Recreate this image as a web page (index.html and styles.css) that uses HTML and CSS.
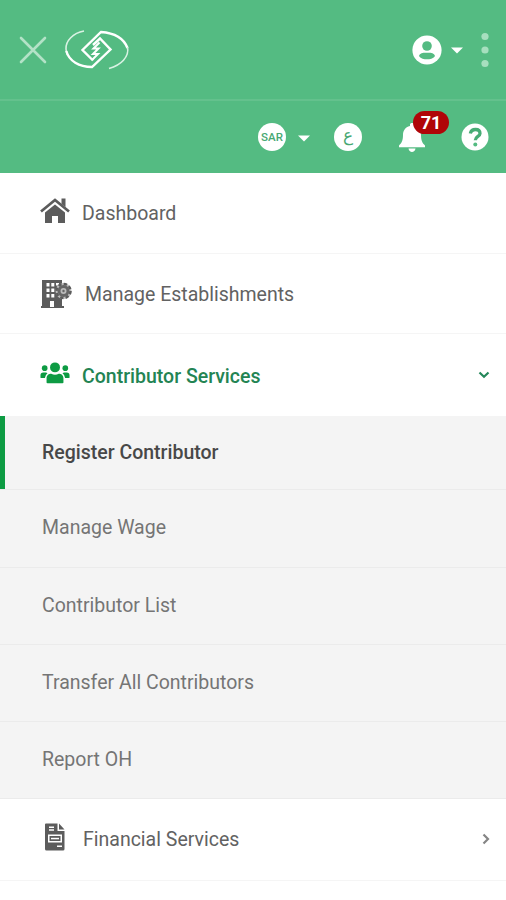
FILE: index.html
```html
<!DOCTYPE html>
<html lang="en">
<head>
<meta charset="utf-8">
<title>Contributor Services</title>
<link rel="stylesheet" href="styles.css">
</head>
<body>
<header class="header">
  <div class="bar bar-main">
    <svg class="close" width="28" height="28" viewBox="0 0 28 28"><path d="M2 2L26 26M26 2L2 26"/></svg>
    <svg class="logo" width="66" height="42" viewBox="0 0 66 42">
      <path class="thin" d="M20 2C9 4 1.500 12 2 20C2.200 22.500 2.500 24 3.500 26"/>
      <path d="M2.300 22C5 32 15 37.800 28 38L46.500 20.500L36 9.500L29 16"/>
      <path d="M29 31.500L18.500 21L37 3C51 4 60 10 63.500 19"/>
      <path class="thin" d="M63.500 18C65.500 28 57 36 45 39.500"/>
      <path class="steps" d="M35.500 13.500L29.500 19.500H34.500L29 25H34L28.500 30.500"/>
    </svg>
    <svg class="user" width="30" height="30" viewBox="0 0 30 30"><circle class="white" cx="15" cy="15" r="14.600"/><circle class="cut" cx="15" cy="11" r="4.800"/><path class="cut" d="M7 21C8 17.500 12 17.800 15 17.800S22 17.500 23 21C21 24 18 24.300 15 24.300S9 24 7 21Z"/></svg>
    <svg class="caret caret-user" width="12" height="7" viewBox="0 0 12 7"><path d="M0 .5H12L6 6.500Z"/></svg>
    <svg class="dots" width="8" height="36" viewBox="0 0 8 36"><circle cx="4" cy="4.500" r="3.600"/><circle cx="4" cy="18" r="3.600"/><circle cx="4" cy="31.500" r="3.600"/></svg>
  </div>
  <div class="bar bar-tools">
    <span class="disc sar">SAR</span>
    <svg class="caret caret-sar" width="12" height="7" viewBox="0 0 12 7"><path d="M0 .5H12L6 6.500Z"/></svg>
    <span class="disc lang">ع</span>
    <span class="bell-wrap">
      <svg width="28" height="30" viewBox="0 0 28 30"><path class="white" d="M12 2.500C12 .5 16 .5 16 2.500V4C21 5 23 9 23 13C23 19 24.500 21 27 23.500V25.300H1V23.500C3.500 21 5 19 5 13C5 9 7 5 12 4ZM10.500 26.500H17.500C17 31 11 31 10.500 26.500Z"/></svg>
      <span class="badge">71</span>
    </span>
    <svg class="help" width="28" height="28" viewBox="0 0 28 28"><circle class="white" cx="14" cy="14" r="13.500"/><path d="M9.300 10.500C10 7.400 12 6.500 14.500 6.500C17.500 6.500 19 8.300 19 10.500C19 13.500 14.300 13.500 14.300 17.300"/><circle class="cut" cx="14.300" cy="21.500" r="2"/></svg>
  </div>
</header>
<nav class="menu">
  <a class="item dashboard">
    <svg class="icon" width="30" height="26" viewBox="0 0 30 26"><path d="M5 14.500L15 6.500L25 14.500V25H18V18H12V25H5Z"/><path d="M21.500 .5H25.500V9L21.500 6Z"/><path class="roof" d="M1 13.500L15 2L29 13.500"/></svg>
    <span class="label">Dashboard</span>
  </a>
  <a class="item establishments">
    <svg class="icon" width="32" height="30" viewBox="0 0 32 30">
      <path d="M2 1H22V27H24V29H1V27H2Z"/>
      <path class="hole" d="M6.500 4H9.500V7.500H6.500ZM11.300 4H14.300V7.500H11.300ZM16 4H19V6.500H16ZM6.500 9.500H9.500V13H6.500ZM11.300 9.500H14.300V13H11.300ZM6.500 15H9.500V18.500H6.500ZM11.300 15H14.300V18.500H11.300ZM10 22H14V28H10Z"/>
      <circle class="gear-gap" cx="23.500" cy="12" r="8"/>
      <circle class="gear-teeth" cx="23.500" cy="12" r="7"/><circle class="gear" cx="23.500" cy="12" r="4.500"/><circle class="gear-hub" cx="23.500" cy="12" r="1.200"/>
    </svg>
    <span class="label">Manage Establishments</span>
  </a>
  <a class="item services">
    <svg class="icon" width="32" height="24" viewBox="0 0 32 24"><circle cx="16" cy="6" r="5.300"/><circle cx="5" cy="6.800" r="3"/><circle cx="27" cy="6.800" r="3"/><path d="M7 22V18C7 14 9.500 12.800 12 12.800C14.500 14.200 17.500 14.200 20 12.800C22.500 12.800 25 14 25 18V22Q25 22.800 24 22.800H8Q7 22.800 7 22ZM.5 17V14.500Q.5 11.500 3.500 11.500H6.500L8 12.200Q5.500 14 5.200 17.300H1ZM31.500 17V14.500Q31.500 11.500 28.500 11.500H25.500L24 12.200Q26.500 14 26.800 17.300H31Z"/></svg>
    <span class="label">Contributor Services</span>
    <svg class="arrow" width="12" height="8" viewBox="0 0 12 8"><path d="M1.500 1.500L6 5.800L10.500 1.500"/></svg>
  </a>
  <div class="submenu">
    <a class="sub active">Register Contributor</a>
    <a class="sub wage">Manage Wage</a>
    <a class="sub list">Contributor List</a>
    <a class="sub transfer">Transfer All Contributors</a>
    <a class="sub report">Report OH</a>
  </div>
  <a class="item financial">
    <svg class="icon" width="20" height="28" viewBox="0 0 20 28"><path d="M1 .5H12.500V8H19.500V26Q19.500 27.500 18 27.500H1.500Q0 27.500 0 26V1.500Q0 .5 1 .5ZM14 .5L19.500 6.500H14Z"/><path class="hole" d="M4 3.500H9V5H4ZM4 6.300H9V7.800H4ZM3 11.500H17V19.500H3ZM12 22.500H17V24H12Z"/><path d="M4.500 13H15.500V18H4.500Z"/><path class="hole" d="M6 14.800H14V16.300H6Z"/></svg>
    <span class="label">Financial Services</span>
    <svg class="arrow" width="8" height="12" viewBox="0 0 8 12"><path d="M1.500 1.500L6 6L1.500 10.500"/></svg>
  </a>
</nav>
</body>
</html>
```

FILE: styles.css
```css
* { box-sizing: border-box; }
body { margin: 0; background: #fff; font: 19.5px/24px Roboto, "Noto Sans", sans-serif; color: #626262; }
svg { display: block; flex: none; }
.header { height: 173px; background: #54bb82; }
.bar { display: flex; align-items: center; }
.bar-main { height: 101px; border-bottom: 2px solid #64c18d; padding: 1px 17px 0 19px; }
.close { fill: none; stroke: #b3e2c7; stroke-width: 2.600; stroke-linecap: round; }
.logo { margin-left: 17px; fill: none; stroke: #fff; stroke-width: 2.400; stroke-linejoin: miter; }
.logo .thin { stroke-width: 1.600; stroke: #d9f2e3; }
.logo .steps { stroke-width: 2; }
.white { fill: #fff; }
.cut { fill: #54bb82; }
.user { margin-left: auto; }
.caret { fill: #fff; }
.caret-user { margin: 1px 0 0 9px; }
.dots { margin-left: 18px; fill: #a6dfbe; }
.bar-tools { height: 72px; justify-content: flex-end; padding: 0 17px 1px 0; }
.disc { width: 28px; height: 28px; border-radius: 50%; background: #fff; display: flex; align-items: center; justify-content: center; color: #48a873; }
.sar { font-size: 11.5px; font-weight: 500; }
.caret-sar { margin: 3px 24px 0 12px; }
.lang { font: 17px/20px "DejaVu Sans", sans-serif; padding-bottom: 3px; }
.bell-wrap { position: relative; margin-left: 36px; }
.badge { position: absolute; left: 15px; top: -11px; width: 36px; height: 23px; border-radius: 12px; background: #b00508; color: #fff; font-size: 18px; font-weight: 700; line-height: 23px; text-align: center; }
.help { margin-left: 35px; fill: none; stroke: #48ac75; stroke-width: 3.300; }
.help .white, .help .cut { stroke: none; }
.item { display: flex; align-items: center; border-bottom: 1px solid #f5f5f5; padding: 0 16px 0 40px; }
.label { padding-top: 2px; }
.icon { fill: #5c5c5c; }
.roof { fill: none; stroke: #5c5c5c; stroke-width: 2.700; }
.hole { fill: #fff; }
.gear-gap { fill: #bbb; }
.gear-teeth { fill: none; stroke: #5c5c5c; stroke-width: 2.500; stroke-dasharray: 3.300 2.200; }
.gear { fill: none; stroke: #666; stroke-width: 3; }
.gear-hub { fill: #666; }
.arrow { margin-left: auto; fill: none; stroke: #858585; stroke-width: 2.200; }
.dashboard { height: 81px; }
.dashboard .icon { margin-bottom: 4px; }
.dashboard .label { margin-left: 12px; }
.establishments { height: 80px; }
.establishments .label { margin-left: 13px; }
.services { height: 82px; border-bottom: 0; color: #238453; font-weight: 500; padding-top: 1px; }
.services .icon { width: 30px; fill: #0d9b43; margin-bottom: 6px; }
.services .label { margin-left: 12px; }
.services .arrow { stroke: #24875a; margin-bottom: 2px; }
.submenu { background: #f4f4f4; }
.sub { display: flex; align-items: center; height: 77px; padding: 0 0 1px 42px; border-bottom: 1px solid #ebebeb; color: #757575; }
.active { height: 74px; box-shadow: inset 5px 0 #0d9b43; padding-bottom: 0; color: #484848; font-weight: 500; }
.wage { height: 78px; }
.transfer { padding-bottom: 0; }
.financial { height: 82px; padding-left: 45px; padding-bottom: 1px; }
.financial .icon { margin-bottom: 5px; }
.financial .label { margin-left: 18px; }
```
